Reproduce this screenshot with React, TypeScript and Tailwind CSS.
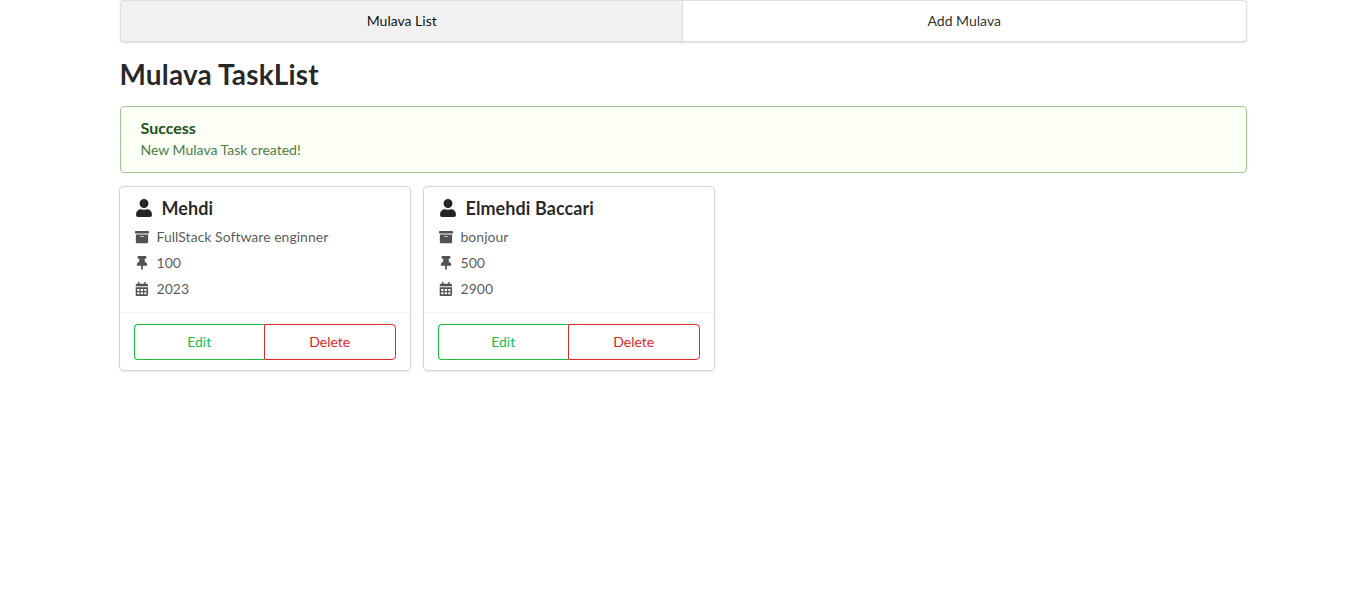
import React from "react";
import { FaArchive, FaThumbtack, FaUser } from "react-icons/fa";

interface Task {
  name: string;
  description: string;
  priority: string;
  year: string;
}

const tasks: Task[] = [
  { name: "Mehdi", description: "FullStack Software enginner", priority: "100", year: "2023" },
  { name: "Elmehdi Baccari", description: "bonjour", priority: "500", year: "2900" },
];

function CalendarIcon({ size }: { size: number }) {
  return (
    <svg width={size} height={size} viewBox="0 0 14 14" fill="currentColor" fillRule="evenodd">
      <path d="M3 .4a.7.7 0 0 1 1.4 0V1.7h4.8V.4a.7.7 0 0 1 1.4 0V1.7h1.1a1.3 1.3 0 0 1 1.3 1.3v1.3H.7V3A1.3 1.3 0 0 1 2 1.7h1zM.7 5.2H13v7.5a1.3 1.3 0 0 1-1.3 1.3H2a1.3 1.3 0 0 1-1.3-1.3zM2.2 7v2h2.3V7zM5.7 7v2h2.4V7zM9.3 7v2h2.2V7zM2.2 10.3v2h2.3v-2zM5.7 10.3v2h2.4v-2zM9.3 10.3v2h2.2v-2z" />
    </svg>
  );
}

function Detail({ icon: Icon, children }: { icon: React.ComponentType<{ size: number }>; children: React.ReactNode }) {
  return (
    <div className="flex h-[26px] items-center">
      <span className="mr-[7px] flex w-[16px] justify-center text-[#525252]">
        <Icon size={14} />
      </span>
      <span>{children}</span>
    </div>
  );
}

function TaskCard({ task }: { task: Task }) {
  return (
    <article className="w-[290px] rounded-[4px] bg-white shadow-[0_1px_3px_0_#d4d4d5,0_0_0_1px_#d4d4d5]">
      <div className="h-[125px] px-[14px] pt-[9px]">
        <h2 className="flex h-[24px] items-center text-[18px] leading-[24px] font-bold tracking-[0.08px] text-black/85">
          <span className="mr-[7px] flex w-[21px] justify-center text-[#262626]">
            <FaUser size={18} />
          </span>
          {task.name}
        </h2>
        <div className="pt-[4px] text-[14px] leading-[20px] tracking-[0.02px] text-black/68">
          <Detail icon={FaArchive}>{task.description}</Detail>
          <Detail icon={FaThumbtack}>{task.priority}</Detail>
          <Detail icon={CalendarIcon}>{task.year}</Detail>
        </div>
      </div>
      <div className="border-t border-black/5 px-[14px] pt-[11px] pb-[10px]">
        <div className="flex h-[36px] text-[14px]">
          <button className="flex-1 rounded-l-[4px] border border-r-0 border-[#21ba45] pb-[2px] text-[#21ba45]">Edit</button>
          <button className="flex-1 rounded-r-[4px] border border-[#db2828] pb-[2px] text-[#db2828]">Delete</button>
        </div>
      </div>
    </article>
  );
}

export default function App() {
  return (
    <main className="mx-auto min-h-screen w-[1127px] font-['Lato',sans-serif] text-[14px] text-black/85">
      <nav className="flex h-[42px] rounded-[4px] border border-[#22242626] bg-white leading-[14px] text-black/95 shadow-[0_1px_2px_0_rgba(34,36,38,0.15)]">
        <a className="flex w-1/2 items-center justify-center rounded-l-[3px] border-r border-[#2224261a] bg-[#f1f1f1] pl-px">Mulava List</a>
        <a className="flex w-1/2 items-center justify-center text-black/85">Add Mulava</a>
      </nav>
      <h1 className="mt-[14px] text-[28px] leading-[36px] font-bold tracking-[0.15px]">Mulava TaskList</h1>
      <section className="mt-[14px] h-[67px] rounded-[4px] border border-[#a3c293] bg-[#fcfff5] px-[20px] pt-[11px] text-[#2c662d]">
        <h3 className="text-[16px] leading-[20px] font-bold text-[#1a531b]">Success</h3>
        <p className="mt-[2px] leading-[20px] opacity-85">New Mulava Task created!</p>
      </section>
      <section className="mt-[14px] flex gap-[14px]">
        {tasks.map((task) => (
          <TaskCard key={task.name} task={task} />
        ))}
      </section>
    </main>
  );
}
